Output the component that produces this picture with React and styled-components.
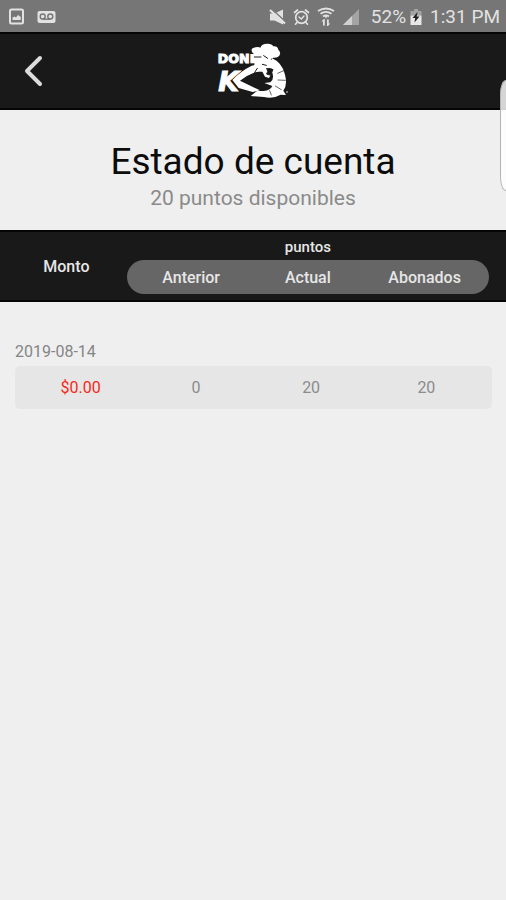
import styled, { createGlobalStyle } from "styled-components";

const GlobalStyle = createGlobalStyle`
  * {
    box-sizing: border-box;
  }
  body {
    margin: 0;
    background: #efefef;
    font-family: Roboto, sans-serif;
  }
`;

const Page = styled.div`
  position: relative;
  min-height: 100vh;
  background: #efefef;
`;

const StatusBar = styled.div`
  display: flex;
  align-items: center;
  justify-content: space-between;
  height: 32px;
  padding: 1px 6px 0 8px;
  background: #767676;
  color: #e2e2e2;
  font-size: 19px;
  line-height: 32px;
  svg {
    display: block;
  }
`;

const StatusGroup = styled.div`
  display: flex;
  align-items: center;
  gap: ${(props) => props.$gap};
`;

const NavBar = styled.header`
  display: grid;
  grid-template-columns: 1fr auto 1fr;
  align-items: center;
  height: 78px;
  background: #191919;
  border-top: 2px solid #050505;
  border-bottom: 2px solid #050505;
`;

const BackButton = styled.button`
  justify-self: start;
  display: flex;
  padding: 8px 16px;
  border: 0;
  background: none;
  cursor: pointer;
`;

const Intro = styled.section`
  padding: 29px 16px 18px;
  text-align: center;
`;

const Title = styled.h1`
  margin: 0;
  font-size: 37px;
  line-height: 46px;
  font-weight: 400;
  color: #0c0c0c;
`;

const Subtitle = styled.p`
  margin: 0;
  font-size: 21px;
  line-height: 27px;
  color: #8a8a8a;
`;

const Table = styled.table`
  display: block;
`;

const TableHead = styled.thead`
  display: grid;
  grid-template-columns: 25fr 75fr;
  grid-template-rows: 26px 34px 6px;
  height: 72px;
  padding: 2px 17px 0 6px;
  background: #191919;
  border-top: 2px solid #050505;
  border-bottom: 2px solid #050505;
`;

const GroupRow = styled.tr`
  display: contents;
`;

const HeadCell = styled.th`
  display: flex;
  align-items: center;
  justify-content: center;
  padding: 0;
  grid-row: ${(props) => (props.$tall ? "1 / 4" : "auto")};
  font-size: ${(props) => (props.$small ? "15px" : "16px")};
  line-height: 20px;
  font-weight: 500;
  color: #e6e6e6;
`;

const PillRow = styled.tr`
  grid-column: 2;
  display: grid;
  grid-template-columns: repeat(3, 1fr);
  padding: 2px 6px 0;
  border-radius: 17px;
  background: #666;
`;

const TableBody = styled.tbody`
  display: block;
  padding: 40px 14px 0 15px;
`;

const DateRow = styled.tr`
  display: block;
`;

const DateCell = styled.th`
  display: block;
  padding: 0 0 4px;
  text-align: left;
  font-size: 16px;
  line-height: 20px;
  font-weight: 400;
  color: #858585;
`;

const DataRow = styled.tr`
  display: grid;
  grid-template-columns: repeat(4, 1fr);
  padding: 0 8px;
  border-radius: 5px;
  background: #e6e6e6;
`;

const DataCell = styled.td`
  padding: 0;
  text-align: center;
  font-size: 16px;
  line-height: 43px;
  color: ${(props) => (props.$amount ? "#f42a20" : "#8c8c8c")};
`;

const EdgeHandle = styled.div`
  position: absolute;
  top: 80px;
  right: 0;
  width: 6px;
  height: 111px;
  border: 1px solid #b4b4b4;
  border-right: 0;
  border-radius: 6px 0 0 6px / 14px 0 0 14px;
  background: rgba(255, 255, 255, 0.82);
`;

const movements = [
  { date: "2019-08-14", amount: "$0.00", before: 0, current: 20, added: 20 },
];

const ImageIcon = () => (
  <svg width="17" height="17" viewBox="0 0 17 17">
    <rect x="2" y="1.5" width="13" height="14" rx="1.5" fill="none" stroke="#e2e2e2" strokeWidth="2" />
    <path d="M4.5 12V9.500l2-1 1.500 1 2-2.500 2.700 2v3z" fill="#e2e2e2" />
  </svg>
);

const VoicemailIcon = () => (
  <svg width="19" height="14" viewBox="0 0 19 14">
    <rect x="0.5" y="1" width="18" height="12" rx="2" fill="#e2e2e2" />
    <g fill="none" stroke="#767676" strokeWidth="1.4">
      <circle cx="5.7" cy="6.5" r="2.5" />
      <circle cx="13.3" cy="6.5" r="2.5" />
      <path d="M5.7 9.2h7.6" />
    </g>
  </svg>
);

const MuteIcon = () => (
  <svg width="17" height="18" viewBox="0 0 17 18">
    <path d="M1 5.5h4.5l8.5-4v15l-8.5-4H1z" fill="#e2e2e2" />
    <path d="M3 1.5L17 14" stroke="#767676" strokeWidth="1.6" />
    <path d="M1 2L16 15.5" stroke="#e2e2e2" strokeWidth="2.2" />
  </svg>
);

const AlarmIcon = () => (
  <svg width="17" height="18" viewBox="0 0 17 18">
    <g fill="none" stroke="#e2e2e2" strokeWidth="1.7" strokeLinecap="round">
      <circle cx="8.5" cy="9.5" r="5.8" />
      <path d="M1.5 4.5l3-2.5M15.5 4.5l-3-2.5M4 14.5l-1.5 1.7M13 14.5l1.5 1.7" />
      <path d="M6 9l2.3 2L11 8" strokeWidth="1.4" />
    </g>
  </svg>
);

const WifiIcon = () => (
  <svg width="18" height="20" viewBox="0 0 18 20">
    <g fill="none" stroke="#e2e2e2" strokeWidth="1.9">
      <path d="M1 4q8-5 16 0" />
      <path d="M3.5 6.8q5.5-3.800 11 0" />
      <path d="M6 9.500q3-2.200 6 0" />
    </g>
    <path d="M7.500 9h3L9 11.500z" fill="#e2e2e2" />
    <path d="M6.800 12l-2.300 2.500h1.500v4h1.800v-6.500zM11 19l2.300-2.500h-1.500v-4H10V19z" fill="#e2e2e2" />
  </svg>
);

const SignalIcon = () => (
  <svg width="17" height="18" viewBox="0 0 17 18">
    <path d="M1 17L17 1v16z" fill="#a4a4a4" />
    <path d="M1 17l9-9v9z" fill="#d0d0d0" />
  </svg>
);

const BatteryIcon = () => (
  <svg width="12" height="18" viewBox="0 0 12 18">
    <path d="M4 1h4v2h3.5v4.5H.5V3H4z" fill="#a4a4a4" />
    <path d="M.5 7.5h11V17H.5z" fill="#e8e8e8" />
    <path d="M7.5 4l-5 6h2.700l-.700 4.500 5-6H6.700z" fill="#222" />
  </svg>
);

const BackIcon = () => (
  <svg width="34" height="34" viewBox="0 0 34 34">
    <path d="M24 4L11 17l13 13" fill="none" stroke="#dcdcdc" strokeWidth="4" strokeLinecap="round" strokeLinejoin="round" />
  </svg>
);

const Logo = () => (
  <svg width="100" height="66" viewBox="0 0 300 198" role="img" aria-label="Don K">
    <g transform="translate(6 0)">
      <g fill="#fff">
        {/* chef hat */}
        <path d="M140 38q-2-8 12-10 8-3 14 1 4-12 20-12 14-1 19 8 13-1 15 10 7 7 5 14-3 11-20 10l-7 3-4 10-16 2-18-12-6-12q-12-2-14-12z" />
        {/* letters */}
        <text x="38" y="76" fontFamily="DejaVu Sans" fontWeight="700" fontSize="38" stroke="#fff" strokeWidth="3">DON</text>
        <text x="40" y="160" fontFamily="DejaVu Sans" fontWeight="700" fontStyle="italic" fontSize="80" stroke="#fff" strokeWidth="3">K</text>
        <path d="M136 48h44v28h-44z" />
        {/* strokes that tie the letter to the shrimp */}
        <path d="M82 126q24-26 58-43l50-12 6 26-46 6q-24 9-45 25l60 29-22 5-42-12z" />
        {/* shrimp head and body */}
        <path d="M148 76l48-12 16 8-8 24-12 24-12-4-8-15-24-5z" />
        <path d="M200 60q32 14 40 50 8 32-5 48l8 13-16-1q-22 13-50 7l-40-3 19-15h20q20-2 26-15l-24-9 18-2q14-10 4-34z" />
      </g>
      <g fill="none" stroke="#191919" strokeWidth="3" strokeLinecap="round">
        <path d="M148 57h20M176 53l12 8M172 79l12 3M157 91l-8 12" />
        <path d="M186 92q12-2 18 3-6 8-4 16-9 0-15-3 6-7 1-16z" fill="#191919" />
        <path d="M218 106l18-8M219 126l22 1M211 144l18 11M194 158l5 13" strokeWidth="2" />
      </g>
      <circle cx="246" cy="162" r="3" fill="#999" />
    </g>
  </svg>
);

const App = () => {
  return (
    <Page>
      <GlobalStyle />
      <StatusBar>
        <StatusGroup $gap="12px">
          <ImageIcon />
          <VoicemailIcon />
        </StatusGroup>
        <StatusGroup $gap="12px">
          <StatusGroup $gap="7px">
            <MuteIcon />
            <AlarmIcon />
            <WifiIcon />
            <SignalIcon />
          </StatusGroup>
          <StatusGroup $gap="8px">
            <StatusGroup $gap="4px">
              <span>52%</span>
              <BatteryIcon />
            </StatusGroup>
            <span>1:31 PM</span>
          </StatusGroup>
        </StatusGroup>
      </StatusBar>
      <NavBar>
        <BackButton aria-label="Regresar">
          <BackIcon />
        </BackButton>
        <Logo />
      </NavBar>
      <Intro>
        <Title>Estado de cuenta</Title>
        <Subtitle>20 puntos disponibles</Subtitle>
      </Intro>
      <Table>
        <TableHead>
          <GroupRow>
            <HeadCell rowSpan={2} $tall>Monto</HeadCell>
            <HeadCell colSpan={3} $small>puntos</HeadCell>
          </GroupRow>
          <PillRow>
            <HeadCell>Anterior</HeadCell>
            <HeadCell>Actual</HeadCell>
            <HeadCell>Abonados</HeadCell>
          </PillRow>
        </TableHead>
        <TableBody>
          {movements.map((item) => [
            <DateRow key={item.date}>
              <DateCell colSpan={4}>{item.date}</DateCell>
            </DateRow>,
            <DataRow key={item.date + "-data"}>
              <DataCell $amount>{item.amount}</DataCell>
              <DataCell>{item.before}</DataCell>
              <DataCell>{item.current}</DataCell>
              <DataCell>{item.added}</DataCell>
            </DataRow>,
          ])}
        </TableBody>
      </Table>
      <EdgeHandle />
    </Page>
  );
};

export default App;
